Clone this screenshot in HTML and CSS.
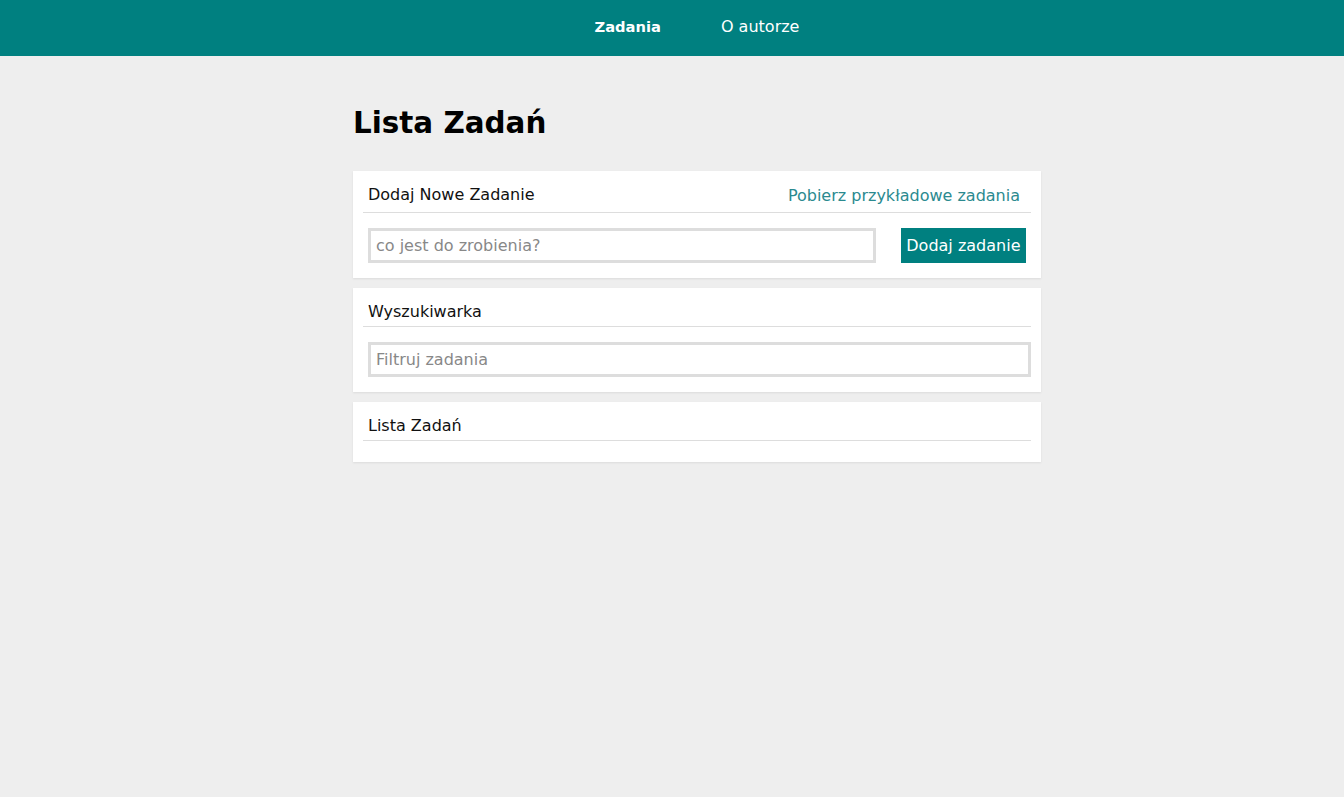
FILE: index.html
```html
<!DOCTYPE html>
<html lang="pl">
<head>
<meta charset="utf-8">
<title>Lista Zadań</title>
<link rel="stylesheet" href="styles.css">
</head>
<body>
<header class="topbar">
  <nav class="nav">
    <a class="nav-link nav-link--active" href="#">Zadania</a>
    <a class="nav-link" href="#">O autorze</a>
  </nav>
</header>
<main class="page">
  <div class="container">
    <h1 class="page-title">Lista Zadań</h1>

    <section class="card">
      <div class="card-header card-header--tall">
        <span class="card-title">Dodaj Nowe Zadanie</span>
        <a class="card-link" href="#">Pobierz przykładowe zadania</a>
      </div>
      <div class="card-body card-body--row">
        <input class="text-input text-input--grow" type="text" placeholder="co jest do zrobienia?">
        <button class="btn" type="button">Dodaj zadanie</button>
      </div>
    </section>

    <section class="card">
      <div class="card-header">
        <span class="card-title">Wyszukiwarka</span>
      </div>
      <div class="card-body">
        <input class="text-input text-input--full" type="text" placeholder="Filtruj zadania">
      </div>
    </section>

    <section class="card card--list">
      <div class="card-header">
        <span class="card-title">Lista Zadań</span>
      </div>
      <ul class="task-list"></ul>
    </section>
  </div>
</main>
</body>
</html>
```
FILE: styles.css
```css
* {
  box-sizing: border-box;
}

html, body {
  margin: 0;
  padding: 0;
}

body {
  background: #eeeeee;
  font-family: "DejaVu Sans", "Liberation Sans", sans-serif;
  font-size: 16px;
  color: #111;
  min-height: 797px;
}

.topbar {
  height: 56px;
  background: #008080;
}

.nav {
  display: flex;
  justify-content: center;
  padding-left: 50px;
  height: 56px;
}

.nav-link {
  display: block;
  padding: 0 30px;
  line-height: 54px;
  color: #ffffff;
  text-decoration: none;
  font-size: 16px;
}

.nav-link--active {
  font-weight: bold;
  font-size: 14.7px;
}

.page {
  padding-left: 50px;
}

.container {
  width: 688px;
  margin: 0 auto;
}

.page-title {
  margin: 49px 0 30px;
  font-size: 29.4px;
  line-height: 36px;
  font-weight: bold;
  color: #000;
}

.card {
  background: #ffffff;
  padding: 14px 10px 15px;
  margin-bottom: 10px;
  box-shadow: 0 1px 2px rgba(0, 0, 0, 0.08);
}

.card--list {
  padding-bottom: 21px;
}

.card-header {
  display: flex;
  justify-content: space-between;
  align-items: baseline;
  padding: 0 11px 4px 5px;
  line-height: 20px;
  border-bottom: 1px solid #dddddd;
}

.card-header--tall {
  padding-bottom: 7px;
}

.card-title {
  color: #111;
}

.card-link {
  color: #2b8a8f;
  text-decoration: none;
  position: relative;
  top: 1px;
}

.card-body {
  padding: 15px 0 0 5px;
}

.card-body--row {
  display: flex;
  gap: 25px;
  padding-right: 5px;
}

.text-input {
  display: block;
  height: 35px;
  border: 3px solid #dddddd;
  background: #ffffff;
  padding: 0 5px;
  font-family: inherit;
  font-size: 16px;
  color: #111;
  outline: none;
}

.text-input::placeholder {
  color: #888888;
}

.text-input--grow {
  flex: 1;
  min-width: 0;
}

.text-input--full {
  width: 100%;
}

.btn {
  height: 35px;
  padding: 0 5.5px;
  border: none;
  background: #008080;
  color: #ffffff;
  font-family: inherit;
  font-size: 16px;
  cursor: pointer;
}

.task-list {
  list-style: none;
  margin: 0;
  padding: 0;
}
```
